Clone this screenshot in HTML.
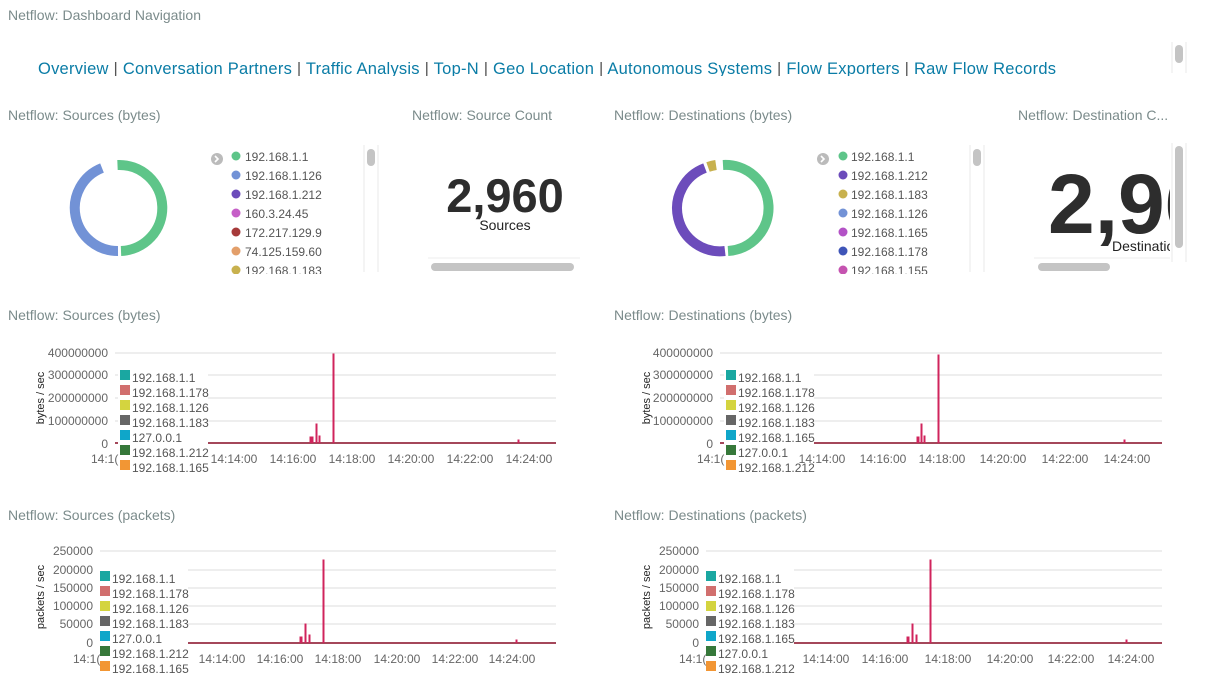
<!DOCTYPE html>
<html><head><meta charset="utf-8"><style>
html,body{margin:0;padding:0;background:#fff;width:1209px;height:684px;overflow:hidden}
svg{display:block;font-family:"Liberation Sans",sans-serif}
.t{font-size:14px;fill:#7b8b8b}
.nav{font-size:16.5px;fill:#0a7ca6}
.lg{font-size:12px;fill:#555}
.ax{font-size:12px;fill:#666}
.g{stroke:#ddd;stroke-width:1}
</style></head><body>
<svg width="1209" height="684" viewBox="0 0 1209 684">
<text x="8" y="20" class="t">Netflow: Dashboard Navigation</text>
<svg x="0" y="50" width="1170" height="26" overflow="hidden"><text x="38" y="24" class="nav" textLength="1018" lengthAdjust="spacing">Overview <tspan fill="#555">|</tspan> Conversation Partners <tspan fill="#555">|</tspan> Traffic Analysis <tspan fill="#555">|</tspan> Top-N <tspan fill="#555">|</tspan> Geo Location <tspan fill="#555">|</tspan> Autonomous Systems <tspan fill="#555">|</tspan> Flow Exporters <tspan fill="#555">|</tspan> Raw Flow Records</text></svg>
<line x1="1172" y1="42" x2="1172" y2="73" stroke="#e8e8e8"/><line x1="1186" y1="42" x2="1186" y2="73" stroke="#e8e8e8"/>
<rect x="1175" y="45" width="8" height="18" rx="4" fill="#c4c4c4"/>

<text x="8" y="120" class="t">Netflow: Sources (bytes)</text>
<text x="412" y="120" class="t">Netflow: Source Count</text>
<text x="614" y="120" class="t">Netflow: Destinations (bytes)</text>
<text x="1018" y="120" class="t">Netflow: Destination C...</text>

<g fill="none" stroke-width="10">
<path d="M117.5 165 A43 43 0 0 1 121 251" stroke="#5ec589"/>
<path d="M118 251 A43 43 0 0 1 102 168" stroke="#7292d6"/>
</g>
<g fill="none" stroke-width="10">
<path d="M723 165 A43 43 0 0 1 728 251" stroke="#5ec589"/>
<path d="M725 251 A43 43 0 0 1 705 168" stroke="#6c4cbb"/>
<path d="M708 167 A43 43 0 0 1 716 165" stroke="#c8b14e"/>
</g>

<g>
<circle cx="217" cy="159" r="6" fill="#bbb"/><path d="M215 156 l3 3 l-3 3" stroke="#fff" stroke-width="1.6" fill="none"/>
<circle cx="236" cy="156" r="4.5" fill="#5ec589"/><text x="245" y="161" class="lg">192.168.1.1</text>
<circle cx="236" cy="175" r="4.5" fill="#7292d6"/><text x="245" y="180" class="lg">192.168.1.126</text>
<circle cx="236" cy="194" r="4.5" fill="#6c4cbb"/><text x="245" y="199" class="lg">192.168.1.212</text>
<circle cx="236" cy="213" r="4.5" fill="#c65fc7"/><text x="245" y="218" class="lg">160.3.24.45</text>
<circle cx="236" cy="232" r="4.5" fill="#a63a3a"/><text x="245" y="237" class="lg">172.217.129.9</text>
<circle cx="236" cy="251" r="4.5" fill="#e39f6a"/><text x="245" y="256" class="lg">74.125.159.60</text>
<circle cx="236" cy="270" r="4.5" fill="#c8b14e"/><text x="245" y="275" class="lg">192.168.1.183</text>
</g>
<rect x="200" y="274" width="180" height="12" fill="#fff"/>
<line x1="364" y1="145" x2="364" y2="272" stroke="#e8e8e8"/><line x1="378" y1="145" x2="378" y2="272" stroke="#e8e8e8"/>
<rect x="367" y="149" width="8" height="17" rx="4" fill="#c4c4c4"/>

<g>
<circle cx="823" cy="159" r="6" fill="#bbb"/><path d="M821 156 l3 3 l-3 3" stroke="#fff" stroke-width="1.6" fill="none"/>
<circle cx="843" cy="156" r="4.5" fill="#5ec589"/><text x="851" y="161" class="lg">192.168.1.1</text>
<circle cx="843" cy="175" r="4.5" fill="#6c4cbb"/><text x="851" y="180" class="lg">192.168.1.212</text>
<circle cx="843" cy="194" r="4.5" fill="#c8b14e"/><text x="851" y="199" class="lg">192.168.1.183</text>
<circle cx="843" cy="213" r="4.5" fill="#7292d6"/><text x="851" y="218" class="lg">192.168.1.126</text>
<circle cx="843" cy="232" r="4.5" fill="#b352c6"/><text x="851" y="237" class="lg">192.168.1.165</text>
<circle cx="843" cy="251" r="4.5" fill="#3f55b8"/><text x="851" y="256" class="lg">192.168.1.178</text>
<circle cx="843" cy="270" r="4.5" fill="#c553b0"/><text x="851" y="275" class="lg">192.168.1.155</text>
</g>
<rect x="800" y="274" width="190" height="12" fill="#fff"/>
<line x1="970" y1="145" x2="970" y2="272" stroke="#e8e8e8"/><line x1="984" y1="145" x2="984" y2="272" stroke="#e8e8e8"/>
<rect x="973" y="149" width="8" height="17" rx="4" fill="#c4c4c4"/>

<text x="505" y="212" text-anchor="middle" font-size="47" font-weight="bold" fill="#2d2d2d">2,960</text>
<text x="505" y="230" text-anchor="middle" font-size="14" fill="#222">Sources</text>
<line x1="428" y1="258" x2="580" y2="258" stroke="#eee"/>
<rect x="431" y="263" width="143" height="8" rx="4" fill="#c4c4c4"/>

<svg x="1030" y="140" width="140" height="120" overflow="hidden">
<text x="18" y="93" font-size="84" font-weight="bold" fill="#2d2d2d">2,960</text>
<text x="82" y="111" font-size="14" fill="#222">Destinations</text>
</svg>
<line x1="1034" y1="258" x2="1170" y2="258" stroke="#eee"/>
<rect x="1038" y="263" width="72" height="8" rx="4" fill="#c4c4c4"/>
<line x1="1172" y1="143" x2="1172" y2="262" stroke="#e8e8e8"/><line x1="1186" y1="143" x2="1186" y2="262" stroke="#e8e8e8"/>
<rect x="1175" y="146" width="8" height="102" rx="4" fill="#c4c4c4"/>

<text x="8" y="320" class="t">Netflow: Sources (bytes)</text>
<text x="614" y="320" class="t">Netflow: Destinations (bytes)</text>
<text x="8" y="520" class="t">Netflow: Sources (packets)</text>
<text x="614" y="520" class="t">Netflow: Destinations (packets)</text>

<!-- Left bytes -->
<g>
<line x1="115" y1="353" x2="556" y2="353" class="g"/><line x1="115" y1="375" x2="556" y2="375" class="g"/>
<line x1="115" y1="398" x2="556" y2="398" class="g"/><line x1="115" y1="421" x2="556" y2="421" class="g"/>
<g class="ax" text-anchor="end"><text x="108" y="357">400000000</text><text x="108" y="379">300000000</text><text x="108" y="402">200000000</text><text x="108" y="425">100000000</text><text x="108" y="448">0</text></g>
<text transform="translate(44 398) rotate(-90)" text-anchor="middle" font-size="11" fill="#222">bytes / sec</text>
<line x1="115" y1="443" x2="556" y2="443" stroke="#a4475a" stroke-width="2"/>
<path d="M310 443 V437 H313 V443 M316 443 V424 H317 V443 M319 443 V436 H320 V443 M333 443 V354 H334 V443 M518 443 V440 H519 V443" stroke="#d0245c" fill="#d0245c" stroke-width="1"/>
<rect x="118" y="366" width="90" height="112" fill="#fff"/>
<g class="ax" text-anchor="middle"><text x="234" y="463">14:14:00</text><text x="293" y="463">14:16:00</text><text x="352" y="463">14:18:00</text><text x="411" y="463">14:20:00</text><text x="470" y="463">14:22:00</text><text x="529" y="463">14:24:00</text></g>
<g class="lg">
<rect x="120" y="370" width="10" height="10" fill="#1aa7a1"/><text x="132" y="382">192.168.1.1</text>
<rect x="120" y="385" width="10" height="10" fill="#d16f6e"/><text x="132" y="397">192.168.1.178</text>
<rect x="120" y="400" width="10" height="10" fill="#d4d43f"/><text x="132" y="412">192.168.1.126</text>
<rect x="120" y="415" width="10" height="10" fill="#666"/><text x="132" y="427">192.168.1.183</text>
<rect x="120" y="430" width="10" height="10" fill="#0fa6c9"/><text x="132" y="442">127.0.0.1</text>
<rect x="120" y="445" width="10" height="10" fill="#36783a"/><text x="132" y="457">192.168.1.212</text>
<rect x="120" y="460" width="10" height="10" fill="#f29634"/><text x="132" y="472">192.168.1.165</text>
</g>
<text x="91" y="463" class="ax">14:1(</text>
</g>

<!-- Right bytes -->
<g>
<line x1="720" y1="353" x2="1162" y2="353" class="g"/><line x1="720" y1="375" x2="1162" y2="375" class="g"/>
<line x1="720" y1="398" x2="1162" y2="398" class="g"/><line x1="720" y1="421" x2="1162" y2="421" class="g"/>
<g class="ax" text-anchor="end"><text x="713" y="357">400000000</text><text x="713" y="379">300000000</text><text x="713" y="402">200000000</text><text x="713" y="425">100000000</text><text x="713" y="448">0</text></g>
<text transform="translate(650 398) rotate(-90)" text-anchor="middle" font-size="11" fill="#222">bytes / sec</text>
<line x1="720" y1="443" x2="1162" y2="443" stroke="#a4475a" stroke-width="2"/>
<path d="M917 443 V437 H919 V443 M921 443 V424 H922 V443 M924 443 V436 H925 V443 M938 443 V355 H939 V443 M1124 443 V440 H1125 V443" stroke="#d0245c" fill="#d0245c"/>
<rect x="724" y="366" width="90" height="112" fill="#fff"/>
<g class="ax" text-anchor="middle"><text x="822" y="463">14:14:00</text><text x="883" y="463">14:16:00</text><text x="942" y="463">14:18:00</text><text x="1003" y="463">14:20:00</text><text x="1065" y="463">14:22:00</text><text x="1127" y="463">14:24:00</text></g>
<g class="lg">
<rect x="726" y="370" width="10" height="10" fill="#1aa7a1"/><text x="738" y="382">192.168.1.1</text>
<rect x="726" y="385" width="10" height="10" fill="#d16f6e"/><text x="738" y="397">192.168.1.178</text>
<rect x="726" y="400" width="10" height="10" fill="#d4d43f"/><text x="738" y="412">192.168.1.126</text>
<rect x="726" y="415" width="10" height="10" fill="#666"/><text x="738" y="427">192.168.1.183</text>
<rect x="726" y="430" width="10" height="10" fill="#0fa6c9"/><text x="738" y="442">192.168.1.165</text>
<rect x="726" y="445" width="10" height="10" fill="#36783a"/><text x="738" y="457">127.0.0.1</text>
<rect x="726" y="460" width="10" height="10" fill="#f29634"/><text x="738" y="472">192.168.1.212</text>
</g>
<text x="697" y="463" class="ax">14:1(</text>
</g>

<!-- Left packets -->
<g>
<line x1="100" y1="551" x2="556" y2="551" class="g"/><line x1="100" y1="570" x2="556" y2="570" class="g"/>
<line x1="100" y1="588" x2="556" y2="588" class="g"/><line x1="100" y1="606" x2="556" y2="606" class="g"/><line x1="100" y1="624" x2="556" y2="624" class="g"/>
<g class="ax" text-anchor="end"><text x="93" y="555">250000</text><text x="93" y="574">200000</text><text x="93" y="592">150000</text><text x="93" y="610">100000</text><text x="93" y="628">50000</text><text x="93" y="647">0</text></g>
<text transform="translate(44 597) rotate(-90)" text-anchor="middle" font-size="11" fill="#222">packets / sec</text>
<line x1="100" y1="643" x2="556" y2="643" stroke="#a4475a" stroke-width="2"/>
<path d="M300 643 V637 H302 V643 M305 643 V624 H306 V643 M309 643 V635 H310 V643 M323 643 V560 H324 V643 M516 643 V640 H517 V643" stroke="#d0245c" fill="#d0245c"/>
<rect x="98" y="567" width="90" height="117" fill="#fff"/>
<g class="ax" text-anchor="middle"><text x="222" y="663">14:14:00</text><text x="280" y="663">14:16:00</text><text x="338" y="663">14:18:00</text><text x="397" y="663">14:20:00</text><text x="455" y="663">14:22:00</text><text x="512" y="663">14:24:00</text></g>
<g class="lg">
<rect x="100" y="571" width="10" height="10" fill="#1aa7a1"/><text x="112" y="583">192.168.1.1</text>
<rect x="100" y="586" width="10" height="10" fill="#d16f6e"/><text x="112" y="598">192.168.1.178</text>
<rect x="100" y="601" width="10" height="10" fill="#d4d43f"/><text x="112" y="613">192.168.1.126</text>
<rect x="100" y="616" width="10" height="10" fill="#666"/><text x="112" y="628">192.168.1.183</text>
<rect x="100" y="631" width="10" height="10" fill="#0fa6c9"/><text x="112" y="643">127.0.0.1</text>
<rect x="100" y="646" width="10" height="10" fill="#36783a"/><text x="112" y="658">192.168.1.212</text>
<rect x="100" y="661" width="10" height="10" fill="#f29634"/><text x="112" y="673">192.168.1.165</text>
</g>
<text x="73" y="663" class="ax">14:1(</text>
</g>

<!-- Right packets -->
<g>
<line x1="706" y1="551" x2="1162" y2="551" class="g"/><line x1="706" y1="570" x2="1162" y2="570" class="g"/>
<line x1="706" y1="588" x2="1162" y2="588" class="g"/><line x1="706" y1="606" x2="1162" y2="606" class="g"/><line x1="706" y1="624" x2="1162" y2="624" class="g"/>
<g class="ax" text-anchor="end"><text x="699" y="555">250000</text><text x="699" y="574">200000</text><text x="699" y="592">150000</text><text x="699" y="610">100000</text><text x="699" y="628">50000</text><text x="699" y="647">0</text></g>
<text transform="translate(650 597) rotate(-90)" text-anchor="middle" font-size="11" fill="#222">packets / sec</text>
<line x1="706" y1="643" x2="1162" y2="643" stroke="#a4475a" stroke-width="2"/>
<path d="M907 643 V637 H909 V643 M912 643 V624 H913 V643 M916 643 V635 H917 V643 M930 643 V560 H931 V643 M1126 643 V640 H1127 V643" stroke="#d0245c" fill="#d0245c"/>
<rect x="704" y="567" width="90" height="117" fill="#fff"/>
<g class="ax" text-anchor="middle"><text x="826" y="663">14:14:00</text><text x="885" y="663">14:16:00</text><text x="948" y="663">14:18:00</text><text x="1010" y="663">14:20:00</text><text x="1071" y="663">14:22:00</text><text x="1131" y="663">14:24:00</text></g>
<g class="lg">
<rect x="706" y="571" width="10" height="10" fill="#1aa7a1"/><text x="718" y="583">192.168.1.1</text>
<rect x="706" y="586" width="10" height="10" fill="#d16f6e"/><text x="718" y="598">192.168.1.178</text>
<rect x="706" y="601" width="10" height="10" fill="#d4d43f"/><text x="718" y="613">192.168.1.126</text>
<rect x="706" y="616" width="10" height="10" fill="#666"/><text x="718" y="628">192.168.1.183</text>
<rect x="706" y="631" width="10" height="10" fill="#0fa6c9"/><text x="718" y="643">192.168.1.165</text>
<rect x="706" y="646" width="10" height="10" fill="#36783a"/><text x="718" y="658">127.0.0.1</text>
<rect x="706" y="661" width="10" height="10" fill="#f29634"/><text x="718" y="673">192.168.1.212</text>
</g>
<text x="679" y="663" class="ax">14:1(</text>
</g>
</svg>
</body></html>
